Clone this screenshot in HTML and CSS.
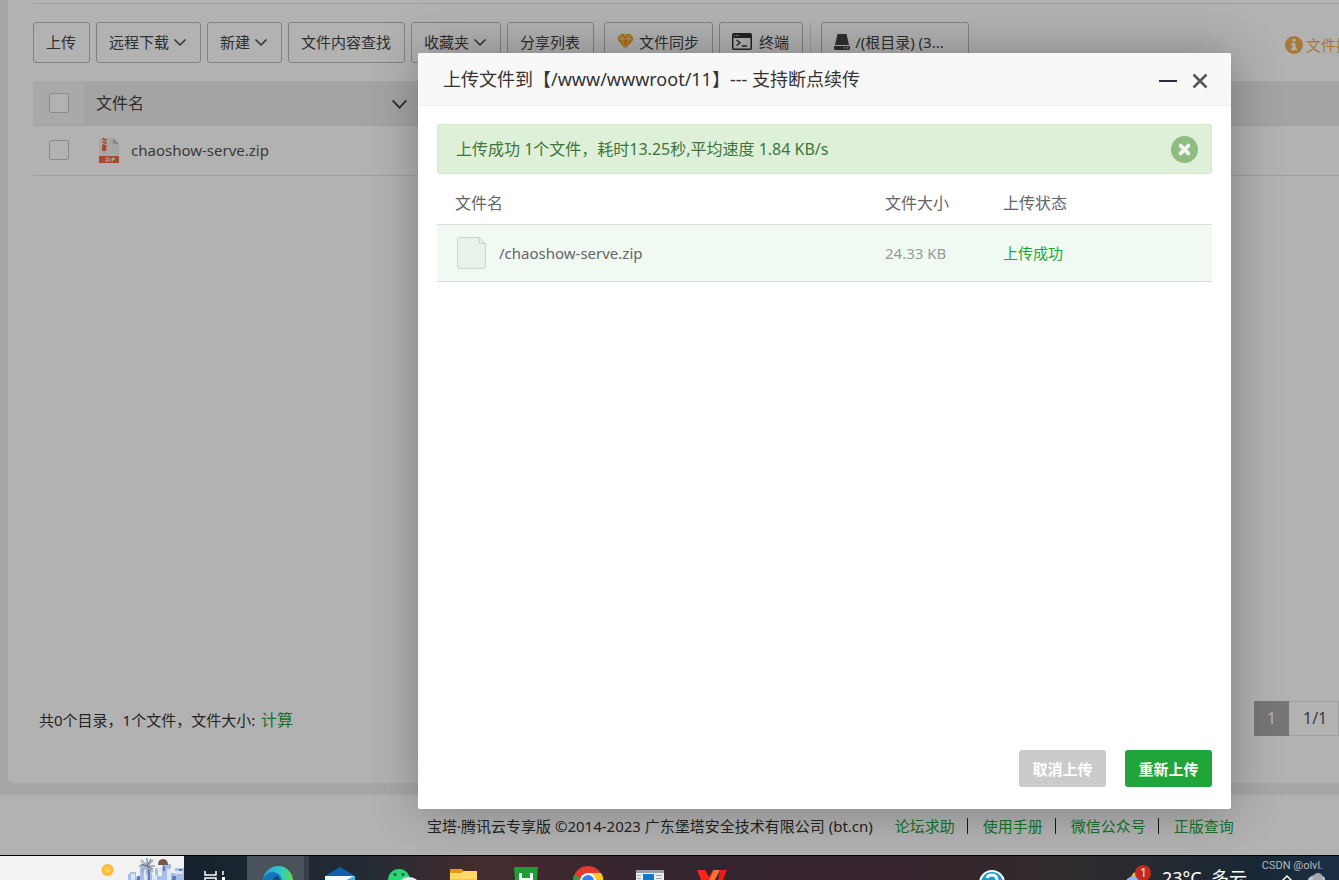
FILE: index.html
```html
<!DOCTYPE html>
<html lang="zh-CN">
<head>
<meta charset="utf-8">
<title>文件管理</title>
<link rel="stylesheet" href="styles.css">
</head>
<body>
<div class="app">
  <main class="main">
    <section class="panel">
      <div class="toolbar">
        <button class="btn">上传</button>
        <button class="btn">远程下载<svg class="caret" viewBox="0 0 14 14"><path d="M1.500 4.500l5.500 5.500 5.500-5.500"/></svg></button>
        <button class="btn">新建<svg class="caret" viewBox="0 0 14 14"><path d="M1.500 4.500l5.500 5.500 5.500-5.500"/></svg></button>
        <button class="btn">文件内容查找</button>
        <button class="btn">收藏夹<svg class="caret" viewBox="0 0 14 14"><path d="M1.500 4.500l5.500 5.500 5.500-5.500"/></svg></button>
        <button class="btn">分享列表</button>
        <button class="btn btn-sync"><svg class="gem" viewBox="0 0 17 15"><path fill="#f39c12" d="M3.500 0h10L17 5 8.500 15 0 5z"/><path fill="none" stroke="#fff" stroke-width=".6" d="M0 5h17M3.500 0L5 5l3.500 10L12 5l1.500-5M5 5l3.500-5L12 5"/></svg>文件同步</button>
        <button class="btn"><svg class="term" viewBox="0 0 20 17"><rect x=".75" y=".75" width="18.500" height="15.500" rx="1" fill="#fff" stroke="#333" stroke-width="1.500"/><path fill="#333" d="M1 1h18v4H1z"/><path stroke="#fff" d="M2 2.500h1M4 2.500h1M6 2.500h1"/><path fill="none" stroke="#333" stroke-width="1.300" d="M4.500 7l3.500 2.700-3.500 2.700M10 13h5"/></svg>终端</button>
        <span class="split"></span>
        <button class="btn btn-disk"><svg class="disk" viewBox="0 0 16 16"><path fill="#444" d="M3.500 0h9L15 11H1zM0 12h16v2.500q0 1.500-1.500 1.500h-13Q0 16 0 14.500z"/><path fill="#fff" d="M10 13.300h1.300v1.300H10zM13 13.300h1.300v1.300H13z"/></svg>/(根目录) (3...</button>
        <a class="tip" href="#"><svg class="info" viewBox="0 0 18 18"><circle cx="9" cy="9" r="9" fill="#f0ad4e"/><path fill="#fff" d="M7.500 3h3v2.800h-3zM6 7.200h4.500v5.200H12v1.900H6v-1.900h1.500V9H6z"/></svg>文件操</a>
      </div>
      <table class="files">
        <thead>
          <tr><th class="check"><input type="checkbox" aria-label="全选"></th><th><div class="name-head">文件名<svg class="sort" viewBox="0 0 18 12"><path d="M1.500 1.500L9 9.500l7.500-8"/></svg></div></th><th></th></tr>
        </thead>
        <tbody>
          <tr><td class="check"><input type="checkbox" aria-label="chaoshow-serve.zip"></td><td><div class="file"><svg class="zip" viewBox="0 0 20 25"><path fill="#f2ece8" d="M0 0h14l6 6v13H0z"/><path fill="#c9c0ba" d="M14 0l6 6h-6z"/><path stroke="#ef6a43" stroke-width="2" stroke-dasharray="2 1" d="M4.500 0v13M6.500 1v12"/><path fill="#ef6a43" d="M3 8h4v5H3zM0 18h20v7H0z"/><path fill="none" stroke="#fff" stroke-width="1" d="M6.500 20h3l-3 3h3M11.500 20l-1 3.500M13 23.500l.7-3.500h1.500q1 1.800-1.800 1.800"/></svg>chaoshow-serve.zip</div></td><td></td></tr>
        </tbody>
      </table>
      <div class="summary">
        <p class="totals">共0个目录，1个文件，文件大小: <a href="#">计算</a></p>
        <div class="pager"><span class="current">1</span><span class="pages">1/1</span></div>
      </div>
    </section>
  </main>
  <footer class="footer">
    <span class="copy">宝塔·腾讯云专享版 ©2014-2023 广东堡塔安全技术有限公司 (bt.cn)</span>
    <a href="#">论坛求助</a><i></i><a href="#">使用手册</a><i></i><a href="#">微信公众号</a><i></i><a href="#">正版查询</a>
  </footer>
  <div class="shade"></div>
  <div class="dialog" role="dialog" aria-labelledby="dialog-title">
    <header class="dialog-head">
      <h2 id="dialog-title">上传文件到【/www/wwwroot/11】--- 支持断点续传</h2>
      <button class="icon-btn" aria-label="最小化"><svg viewBox="0 0 18 18"><path d="M0 9h18"/></svg></button>
      <button class="icon-btn" aria-label="关闭"><svg viewBox="0 0 18 18"><path stroke="#55545f" stroke-width="2.500" d="M2.500 2.500l13 13M15.500 2.500l-13 13"/></svg></button>
    </header>
    <div class="dialog-body">
      <div class="alert">上传成功 1个文件，耗时13.25秒,平均速度 1.84 KB/s<button class="alert-close" aria-label="关闭提示"><svg viewBox="0 0 28 28"><circle cx="14" cy="14" r="14" fill="#8fbc80"/><path stroke="#f2f5ee" stroke-width="4" stroke-linecap="round" d="M10 10l8 8M18 10l-8 8"/></svg></button></div>
      <table class="uploads">
        <thead><tr><th>文件名</th><th class="size">文件大小</th><th class="state">上传状态</th></tr></thead>
        <tbody><tr><td><div class="upload-name"><svg class="page" viewBox="0 0 29 32"><path fill="#e8f1ea" stroke="#ccd5cd" d="M2.500.5h20l6 6v23q0 2-2 2h-24q-2 0-2-2v-27q0-2 2-2z"/><path fill="none" stroke="#ccd5cd" d="M22.500.5v6h6"/></svg>/chaoshow-serve.zip</div></td><td class="size">24.33 KB</td><td class="state">上传成功</td></tr></tbody>
      </table>
    </div>
    <div class="dialog-foot">
      <button class="action cancel">取消上传</button>
      <button class="action retry">重新上传</button>
    </div>
  </div>
</div>
<div class="taskbar">
  <div class="widget">
    <svg viewBox="0 0 184 24"><defs><radialGradient id="sun"><stop offset="0" stop-color="#ffda62"/><stop offset="1" stop-color="#fbb22e"/></radialGradient></defs><circle cx="107.500" cy="14" r="6" fill="url(#sun)"/>
      <path fill="#a9bee6" d="M128 24v-6h2v-2h6v5h4v-9l5-3h5l2 10h3V12h3v8h4V8h9v9h4v-5h9v12z"/>
      <path fill="#dbe7fa" d="M131 18h4v6h-4zM144 11h3v13h-3zM159 11h3v6h-3zM167 13h4v11h-4zM175 15h8v3h-8zM152 19h5v5h-5z"/>
      <path fill="#647fae" d="M137 20h3v4h-3zM148 12h2v12h-2zM163 10h2v5h-2zM172 20h4v4h-4zM179 13h3v2h-3z"/>
      <path stroke="#a2afc2" stroke-width="2" d="M147 2v16M139 10h16M141 4l12 12M153 4l-12 12"/><path stroke="#53627f" d="M147 10l4-7M147 10l6 3M147 10l-6-2"/>
      <path fill="#795644" d="M158 9q0-6 5-6t5 6z"/></svg>
  </div>
  <div class="task"><svg viewBox="0 0 62 24"><path fill="none" stroke="#fff" stroke-width="1.500" d="M20 15v4h11v-4M20 24v-2h11v2M38 15v4"/><path fill="#fff" d="M37 21h3v3h-3z"/></svg></div>
  <div class="task active"><svg viewBox="0 0 62 24"><defs><linearGradient id="edge"><stop offset="0" stop-color="#219ed8"/><stop offset=".55" stop-color="#30c5d0"/><stop offset="1" stop-color="#64dc4c"/></linearGradient></defs><circle cx="31" cy="25" r="15" fill="url(#edge)"/><path fill="#1376ba" d="M16 25q2-9 10-9 8 1 9 9z"/><path fill="#174b7c" d="M26 24q0-4 5-4l2 4z"/></svg></div>
  <div class="task"><svg viewBox="0 0 62 24"><path fill="#0f5faf" d="M16 20l15-9 15 9v4H16z"/><path fill="#f4f8fa" d="M16 20h30l-8 4H16z"/><path fill="#35b9ef" d="M46 20v4h-8z"/></svg></div>
  <div class="task"><svg viewBox="0 0 62 24"><circle cx="28" cy="24" r="11" fill="#2bd475"/><circle cx="24" cy="18.500" r="1.500" fill="#17633c"/><circle cx="32" cy="18.500" r="1.500" fill="#17633c"/><ellipse cx="38" cy="27" rx="9" ry="6" fill="#e9ece9"/></svg></div>
  <div class="task"><svg viewBox="0 0 62 24"><path fill="#e49b0b" d="M17 13h12l3 4v7H17z"/><path fill="#ffd965" d="M17 17h11l3-2h13v9H17z"/><path fill="#f4c451" d="M18 23h26v1H18z"/></svg></div>
  <div class="task"><svg viewBox="0 0 62 24"><path fill="#1d9e36" d="M19 11h24l-1 13H20z"/><path fill="none" stroke="#fff" stroke-width="3" d="M25.500 17v7M36.500 17v7M26 23.500h10"/></svg></div>
  <div class="task"><svg viewBox="0 0 62 24"><circle cx="31" cy="25" r="15" fill="#e33b2e"/><path fill="#fdc529" d="M31 17h13q3 4 2 8H32z"/><path fill="#2aa346" d="M16 25q0-4 2-7l6 7z"/><circle cx="31" cy="25" r="8" fill="#fff"/><circle cx="31" cy="25" r="6" fill="#3b7ded"/></svg></div>
  <div class="task"><svg viewBox="0 0 62 24"><path fill="#e9edf0" d="M17 14h28v10H17z"/><path fill="#96a1a8" d="M17 14h28v3H17z"/><path fill="#0d79d6" d="M24 18h11v6H24z"/><path stroke="#9ea7ac" d="M18 19.500h4M18 22.500h4M37 19.500h6M37 22.500h6"/></svg></div>
  <div class="task"><svg viewBox="0 0 62 24"><path fill="#fa2418" d="M16 14h8l4 7 4-7h6l-5 10H20z"/><path fill="#ff7130" d="M33 14h6l-5 10h-6z"/><path fill="#e51e18" d="M39 14h7l-4 10h-5z"/></svg></div>
  <div class="tray">
    <svg class="help" viewBox="0 0 28 24"><circle cx="14" cy="27" r="13" fill="#fff"/><circle cx="14" cy="27" r="11" fill="#189bd3"/><path fill="none" stroke="#fff" stroke-width="3" d="M9 22q1-3 5-3 5 0 5 5"/></svg>
    <svg class="badge" viewBox="0 0 30 24"><circle cx="14" cy="23" r="8" fill="#f4b63c"/><ellipse cx="10" cy="26" rx="9" ry="6" fill="#8fb4f4"/><circle cx="18" cy="17" r="8" fill="#c42b20"/><text x="15" y="21">1</text></svg>
    <span class="weather">23°C&nbsp; 多云</span>
    <svg class="status" viewBox="0 0 44 24"><path fill="none" stroke="#fff" stroke-width="1.500" d="M1 25l5-5 5 5"/><ellipse cx="36" cy="24" rx="9" ry="5" fill="#bfc3c8"/><circle cx="37" cy="22" r="5" fill="#a4a9af"/></svg>
    <span class="mark">CSDN @olvl.</span>
  </div>
</div>
</body>
</html>
```
FILE: styles.css
```css
* { box-sizing: border-box; }
body {
  margin: 0;
  height: 100vh;
  display: flex;
  flex-direction: column;
  overflow: hidden;
  font: 15px/20px "Noto Sans", "Noto Sans CJK SC", sans-serif;
  color: #333;
}
svg { display: block; flex: none; }
a { color: #20a53a; text-decoration: none; }
button { font: inherit; color: inherit; cursor: pointer; }

.app {
  position: relative;
  flex: 1;
  min-height: 0;
  display: flex;
  flex-direction: column;
  overflow: hidden;
  background: #fff;
}
.main {
  flex: 1;
  display: flex;
  padding: 0 0 12px 8px;
  background: #f0f0f0;
}
.panel {
  flex: 1;
  min-width: 0;
  display: flex;
  flex-direction: column;
  padding: 3px 0 47px 25px;
  border-radius: 0 0 0 5px;
  background: #fff;
}
.toolbar {
  display: flex;
  gap: 6px;
  padding: 18px 0;
  border-top: 1px solid #e6e6e6;
  white-space: nowrap;
  overflow: hidden;
}
.btn {
  flex: none;
  display: flex;
  align-items: center;
  height: 41px;
  padding: 0 13px 2px 12px;
  border: 1px solid #bbb;
  border-radius: 3px;
  background: #fff;
  color: #444;
}
.caret { width: 14px; height: 14px; margin-left: 4px; fill: none; stroke: #444; stroke-width: 1.5; }
.btn-sync { margin-left: 4px; }
.gem { width: 17px; height: 15px; margin-right: 5px; }
.term { width: 20px; height: 17px; margin-right: 7px; }
.split { width: 1px; margin: 0 4px 0 1px; background: #ddd; }
.btn-disk { width: 148px; }
.disk { width: 16px; height: 16px; margin-right: 5px; }
.tip { flex: none; display: flex; align-items: center; margin-left: auto; margin-right: -12px; padding-top: 5px; color: #f0ad4e; }
.info { width: 18px; height: 18px; margin-right: 3px; }

.files { width: 100%; border-collapse: collapse; font-size: 15px; table-layout: fixed; }
.files th, .files td { padding: 0; border-bottom: 1px solid #e6e6e6; text-align: left; font-weight: 400; }
.files th { height: 44px; background: #ebebeb; font-size: 16px; color: #444; }
.files td { height: 50px; color: #555; }
.files .check { width: 51px; padding-left: 16px; }
.files th.check { background: #f3f3f3; }
.files th:nth-child(2) { width: 340px; }
.files input {
  appearance: none;
  display: block;
  width: 20px;
  height: 20px;
  margin: 0;
  border: 1px solid #c8c8c8;
  border-radius: 2px;
  background: #fff;
}
.name-head { display: flex; justify-content: space-between; align-items: center; padding: 0 16px 0 12px; }
.sort { width: 17px; height: 11px; margin-top: 4px; fill: none; stroke: #444; stroke-width: 2; }
.file { display: flex; align-items: center; gap: 12px; padding-left: 15px; }
.zip { width: 20px; height: 25px; }
.summary { display: flex; justify-content: space-between; align-items: center; margin-top: auto; padding-left: 6px; }
.totals { margin: 0; padding-top: 3px; }
.totals a { margin-left: 2px; font-size: 16px; }
.pager { display: flex; font-size: 16px; line-height: 33px; }
.current { width: 35px; padding-top: 1px; text-align: center; background: #aaa; color: #fff; }
.pages { width: 50px; padding-left: 14px; border: 1px solid #e6e6e6; border-left: 0; color: #555; }

.footer { height: 60px; display: flex; align-items: center; padding: 2px 0 0 427px; white-space: nowrap; }
.footer .copy { margin-right: 22px; }
.footer i { width: 1px; height: 16px; margin: 0 15px 0 12px; background: #222; }

.shade { position: absolute; inset: 0; background: rgba(0, 0, 0, .3); }
.dialog {
  position: absolute;
  top: 53px;
  left: 418px;
  width: 813px;
  height: 756px;
  display: flex;
  flex-direction: column;
  border-radius: 2px;
  background: #fff;
  box-shadow: 1px 1px 50px rgba(0, 0, 0, .3);
}
.dialog-head {
  display: flex;
  align-items: center;
  gap: 14px;
  height: 53px;
  padding: 0 22px 0 25px;
  border-bottom: 1px solid #eee;
  border-radius: 2px 2px 0 0;
  background: #f8f8f8;
}
.dialog-head h2 { flex: 1; margin: 0; font-size: 18px; font-weight: 400; }
.icon-btn { width: 18px; height: 18px; padding: 0; border: 0; background: none; }
.icon-btn svg { width: 18px; height: 18px; margin-top: 2px; fill: none; stroke: #2e2d3c; stroke-width: 2; }
.dialog-body { flex: 1; padding: 18px 19px; }
.alert {
  display: flex;
  align-items: center;
  justify-content: space-between;
  height: 50px;
  padding: 0 13px 0 18px;
  border: 1px solid #d0e9c6;
  border-radius: 3px;
  background: #dff0d8;
  color: #3c763d;
  font-size: 16px;
}
.alert-close { width: 27px; height: 27px; padding: 0; border: 0; background: none; }
.alert-close svg { width: 27px; height: 27px; }
.uploads { width: 100%; margin-top: 8px; border-collapse: collapse; table-layout: fixed; }
.uploads th, .uploads td { padding: 0; border-bottom: 1px solid #ddd; text-align: left; color: #666; }
.uploads th { height: 42px; padding-left: 18px; font-size: 16px; font-weight: 400; }
.uploads td { height: 57px; background: #f0f9f2; }
.uploads .size { width: 118px; padding-left: 0; }
.uploads .state { width: 209px; padding-left: 0; }
.uploads td.size { color: #999; }
.uploads td.state { color: #20a53a; }
.upload-name { display: flex; align-items: center; gap: 13px; padding-left: 20px; }
.page { width: 29px; height: 32px; }
.dialog-foot { display: flex; justify-content: flex-end; gap: 19px; padding: 0 19px 22px; }
.action { width: 87px; height: 37px; padding: 0; border: 0; border-radius: 3px; color: #fff; font-weight: 700; }
.cancel { background: #cbcbcb; }
.retry { background: #20a53a; }

.taskbar {
  flex: none;
  height: 25px;
  display: flex;
  overflow: hidden;
  border-top: 1px solid #000;
  background: linear-gradient(90deg, #16232f 15%, #222b35 27%, #462c2e 36%, #34242f 48%, #35242d 68%, #302c2e 80%, #182735 94%, #1b2f45);
}
.widget { width: 185px; background: linear-gradient(90deg, #f2f2f2 184px, #16232f 184px); }
.widget svg { width: 184px; height: 24px; }
.task { width: 62px; }
.task svg { width: 62px; height: 24px; }
.active { background: linear-gradient(90deg, #4a525b 57px, #363e47 57px); }
.tray { flex: 1; display: flex; justify-content: flex-end; position: relative; color: #fff; }
.help { width: 28px; height: 24px; margin-right: 119px; }
.badge { width: 30px; height: 24px; font: 12px "Noto Sans", sans-serif; fill: #fff; }
.weather { margin: 12px 34px 0 7px; font-size: 18px; white-space: nowrap; }
.status { width: 44px; height: 24px; margin-right: 14px; }
.mark { position: absolute; top: 2px; right: 16px; font: 11px/16px Roboto, sans-serif; color: #b5b9be; }
```
